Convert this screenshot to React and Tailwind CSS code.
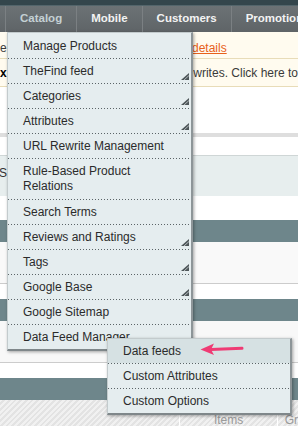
import React from 'react';

const font = "font-['Liberation_Sans',Arial,Helvetica,sans-serif]";

const navItems = [
  { label: 'Catalog', active: true },
  { label: 'Mobile' },
  { label: 'Customers' },
  { label: 'Promotions' },
];

const catalogMenu = [
  { label: 'Manage Products' },
  { label: 'TheFind feed', sub: true },
  { label: 'Categories', sub: true },
  { label: 'Attributes', sub: true },
  { label: 'URL Rewrite Management' },
  { label: 'Rule-Based Product Relations', wrap: true },
  { label: 'Search Terms' },
  { label: 'Reviews and Ratings', sub: true },
  { label: 'Tags', sub: true },
  { label: 'Google Base', sub: true },
  { label: 'Google Sitemap' },
  { label: 'Data Feed Manager', last: true },
];

const feedMenu = [
  { label: 'Data feeds', active: true },
  { label: 'Custom Attributes' },
  { label: 'Custom Options', last: true },
];

function Dots() {
  return <div className="h-px w-full bg-[repeating-linear-gradient(to_right,#5b6467_0_1px,transparent_1px_3px)]" />;
}

function SubMark() {
  return (
    <svg className="absolute right-[2px] bottom-[3px]" width="8" height="7" viewBox="0 0 8 7">
      <polygon points="8,0 8,7 0,7" fill="#4d5558" />
      <line x1="8" y1="2.5" x2="3" y2="7" stroke="#cfd6d8" strokeWidth="0.8" />
    </svg>
  );
}

function MenuRow({ item }) {
  return (
    <>
      <div className={`relative pl-[15px] pr-[18px] pt-[5px] pb-[5px] text-[12px] text-[#2b2b2b] ${item.wrap ? 'leading-[15px]' : 'leading-[14px]'} ${item.active ? 'bg-[#d6e1e3]' : ''}`}>
        {item.label}
        {item.sub && <SubMark />}
      </div>
      {!item.last && <Dots />}
    </>
  );
}

export default function App() {
  return (
    <div className={`relative w-[298px] h-[426px] overflow-hidden bg-white ${font}`}>
      {/* header strip */}
      <div className="h-[5px] bg-[#34464c]" />
      <div className="h-px bg-[#53656b]" />

      {/* nav */}
      <div className="flex h-[26px] bg-[linear-gradient(#6c7275,#5f6467)] pl-[5px] whitespace-nowrap">
        {navItems.map(n => (
          <div
            key={n.label}
            className={`flex items-center border-l border-[#7b8083] px-[14px] text-[11.5px] font-bold ${n.active ? 'text-[#c4d0d4]' : 'text-[#f3f3f3]'}`}
          >
            {n.label}
          </div>
        ))}
      </div>

      {/* messages */}
      <div className="flex h-[27px] items-center border-b border-[#e8dcb8] bg-[#fffbef] pt-[5px] text-[12px] text-[#3a3a3a] whitespace-nowrap">
        <span className="w-[192px]">er</span>
        <span className="text-[#e8601a] underline">details</span>
      </div>
      <div className="flex h-[28px] items-center border-b border-[#e8dcb8] bg-[#fffbef] text-[12px] text-[#3a3a3a] whitespace-nowrap">
        <span className="w-[191px] font-bold text-black">x</span>
        <span>Rewrites. Click here to</span>
      </div>

      {/* page content behind the menu */}
      <div className="h-[46px] bg-white" />
      <div className="h-[4px] bg-[#dedede]" />
      <div className="h-[18px] bg-white" />
      <div className="flex h-[41px] items-center border-t border-[#cfd6d6] bg-[#e7eeee] pb-[6px] text-[12px] text-[#333]">
        <span className="-ml-px">S</span>
      </div>
      <div className="h-[24px] bg-white" />
      <div className="h-[22px] bg-[#6e868b]" />
      <div className="h-[41px] bg-[#f9f9f9]" />
      <div className="h-[16px] border-t border-[#cccccc] bg-white" />
      <div className="h-[22px] bg-[#6e868b]" />
      <div className="h-[41px] bg-[#f8f8f8]" />
      <div className="h-[16px] border-t border-[#cccccc] bg-white" />
      <div className="h-[22px] bg-[#6e868b]" />
      <div className="flex h-[30px] bg-[repeating-linear-gradient(135deg,#f1f1f1_0_2px,#e3e3e3_2px_4px)] text-[12px] text-[#9a9a9a]">
        <div className="w-[182px] border-r border-white" />
        <div className="flex w-[98px] items-end justify-center border-r border-white pb-[1px]">Items</div>
        <div className="flex items-end pl-[7px] pb-[1px]">Gr</div>
      </div>

      {/* Catalog dropdown */}
      <div className="absolute left-[7px] top-[32px] w-[186px] border-l border-t border-[#c3cbcd] border-r-2 border-b-2 border-r-[#8d9598] border-b-[#7f878a] bg-[#e5edef] pt-px shadow-[1px_1px_3px_rgba(0,0,0,0.35)]">
        {catalogMenu.map(item => (
          <MenuRow key={item.label} item={item} />
        ))}
      </div>

      {/* Data Feed Manager flyout */}
      <div className="absolute left-[107px] top-[338px] w-[185px] border-l border-t border-[#c3cbcd] border-r-2 border-b-2 border-r-[#8d9598] border-b-[#7f878a] bg-[#e5edef] shadow-[1px_1px_3px_rgba(0,0,0,0.35)]">
        {feedMenu.map(item => (
          <MenuRow key={item.label} item={item} />
        ))}
      </div>

      {/* pointer arrow */}
      <svg className="absolute left-[200px] top-[342px]" width="44" height="14" viewBox="0 0 44 14">
        <polygon points="0.5,7.5 14,1.5 11,7.5 14,13" fill="#ef3b74" />
        <line x1="11" y1="7.5" x2="42" y2="6.2" stroke="#ef3b74" strokeWidth="3" strokeLinecap="round" />
      </svg>
    </div>
  );
}
